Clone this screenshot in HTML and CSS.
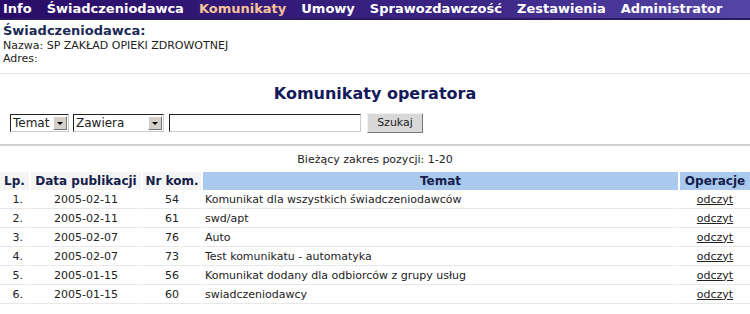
FILE: index.html
```html
<!DOCTYPE html>
<html lang="pl">
<head>
    <meta charset="utf-8">
    <title>Komunikaty operatora</title>
    <link rel="stylesheet" href="styles.css">
</head>
<body>
    <div id="menu">
        <a>Info</a>
        <a>Świadczeniodawca</a>
        <a class="active">Komunikaty</a>
        <a>Umowy</a>
        <a>Sprawozdawczość</a>
        <a>Zestawienia</a>
        <a>Administrator</a>
    </div>
    <div id="provider">
        <div class="provider-title">Świadczeniodawca:</div>
        <div>Nazwa: SP ZAKŁAD OPIEKI ZDROWOTNEJ</div>
        <div>Adres:</div>
    </div>
    <h1>Komunikaty operatora</h1>
    <div id="search">
        <span class="select select-field"><span>Temat</span><i></i></span>
        <span class="select select-cond"><span>Zawiera</span><i></i></span>
        <input type="text" class="search-text">
        <a class="btn">Szukaj</a>
    </div>
    <div class="range">Bieżący zakres pozycji: 1-20</div>
    <table id="list">
        <colgroup>
            <col class="w-lp">
            <col class="w-date">
            <col class="w-nr">
            <col>
            <col class="w-ops">
        </colgroup>
        <thead>
            <tr>
                <th>Lp.</th>
                <th>Data publikacji</th>
                <th>Nr kom.</th>
                <th class="sorted">Temat</th>
                <th class="sorted">Operacje</th>
            </tr>
        </thead>
        <tbody>
            <tr><td class="col-lp">1.</td><td class="col-c">2005-02-11</td><td class="col-nr">54</td><td>Komunikat dla wszystkich świadczeniodawców</td><td class="col-c"><a>odczyt</a></td></tr>
            <tr><td class="col-lp">2.</td><td class="col-c">2005-02-11</td><td class="col-nr">61</td><td>swd/apt</td><td class="col-c"><a>odczyt</a></td></tr>
            <tr><td class="col-lp">3.</td><td class="col-c">2005-02-07</td><td class="col-nr">76</td><td>Auto</td><td class="col-c"><a>odczyt</a></td></tr>
            <tr><td class="col-lp">4.</td><td class="col-c">2005-02-07</td><td class="col-nr">73</td><td>Test komunikatu - automatyka</td><td class="col-c"><a>odczyt</a></td></tr>
            <tr><td class="col-lp">5.</td><td class="col-c">2005-01-15</td><td class="col-nr">56</td><td>Komunikat dodany dla odbiorców z grupy usług</td><td class="col-c"><a>odczyt</a></td></tr>
            <tr><td class="col-lp">6.</td><td class="col-c">2005-01-15</td><td class="col-nr">60</td><td>swiadczeniodawcy</td><td class="col-c"><a>odczyt</a></td></tr>
        </tbody>
    </table>
</body>
</html>
```

FILE: styles.css
```css
body {
    margin: 0;
    font-family: "DejaVu Sans", Verdana, sans-serif;
    font-size: 11px;
    color: #222;
    background: #fff;
}

a {
    cursor: pointer;
}

#menu {
    display: flex;
    height: 18px;
    padding-left: 3px;
    background: linear-gradient(to right, #2a0c68, #3a2484 60%, #5546a6);
    border-bottom: 2px solid #2b1a5c;
    white-space: nowrap;
}

#menu a {
    font-size: 13px;
    font-weight: bold;
    line-height: 18px;
    color: #fff;
    margin-right: 15px;
}

#menu a.active {
    color: #f7c49a;
}

#provider {
    padding: 3px 3px 8px;
    line-height: 13px;
    border-bottom: 1px solid #e4e4e4;
}

.provider-title {
    font-size: 13px;
    font-weight: bold;
    color: #1b2a55;
    line-height: 16px;
}

h1 {
    margin: 10px 0 10px;
    text-align: center;
    font-size: 16px;
    color: #141a5a;
}

#search {
    display: flex;
    align-items: center;
    padding: 0 10px 11px;
    border-bottom: 2px solid #d2d2d2;
}

.select {
    display: flex;
    align-items: center;
    justify-content: space-between;
    height: 16px;
    border: 1px solid #222;
    border-right-color: #ccc;
    border-bottom-color: #ccc;
    padding-left: 2px;
    font-size: 12px;
    background: #fff;
}

.select i {
    width: 14px;
    height: 14px;
    margin-right: 1px;
    background: #d4d0c8;
    border: 1px solid #fff;
    border-right-color: #777;
    border-bottom-color: #777;
    box-sizing: border-box;
    position: relative;
}

.select i:after {
    content: "";
    position: absolute;
    left: 3px;
    top: 5px;
    border: 3px solid transparent;
    border-top-color: #000;
    border-bottom: 0;
}

.select-field {
    width: 55px;
}

.select-cond {
    width: 87px;
    margin-left: 4px;
}

.search-text {
    width: 188px;
    height: 14px;
    margin: 0 0 0 5px;
    padding: 1px;
    border: 1px solid #222;
    border-right-color: #ccc;
    border-bottom-color: #ccc;
}

.btn {
    display: inline-block;
    width: 54px;
    height: 18px;
    margin-left: 6px;
    line-height: 18px;
    text-align: center;
    font-size: 11px;
    background: #d8d8d8;
    border: 1px solid #f2f2f2;
    border-right-color: #777;
    border-bottom-color: #777;
}

.range {
    text-align: center;
    margin: 7px 0 6px;
}

#list {
    width: 100%;
    table-layout: fixed;
    border-collapse: separate;
    border-spacing: 0;
}

.w-lp {
    width: 29px;
}

.w-date {
    width: 112px;
}

.w-nr {
    width: 60px;
}

.w-ops {
    width: 72px;
}

#list th {
    height: 18px;
    padding: 0;
    font-size: 12px;
    color: #14204a;
    background: #f4f4f4;
    border-left: 2px solid #fff;
    white-space: nowrap;
    overflow: hidden;
}

#list th:first-child,
#list td:first-child {
    border-left: 0;
}

#list th.sorted {
    background: #a9c9ee;
}

#list td {
    height: 18px;
    padding: 0 2px;
    border-bottom: 1px solid #e8e8e8;
    border-left: 2px solid #fff;
    white-space: nowrap;
}

.col-c {
    text-align: center;
}

#list td.col-lp {
    text-align: right;
    padding-right: 6px;
}

#list td.col-nr {
    text-align: right;
    padding-right: 22px;
}

.col-c a {
    color: #222;
    text-decoration: underline;
}
```
